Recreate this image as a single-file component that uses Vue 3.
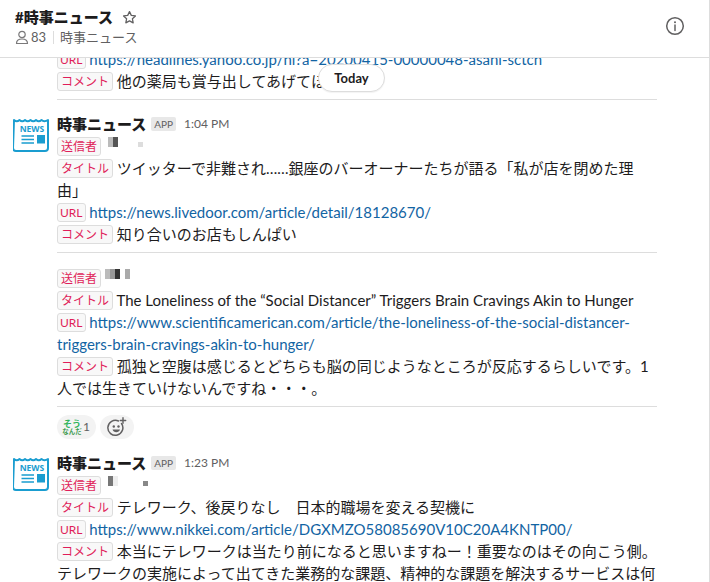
<template>
  <div class="page" lang="ja">
    <header class="channel-header">
      <div>
        <div class="channel-title">
          <span>#時事ニュース</span>
          <svg class="star" width="15" height="15" viewBox="0 0 20 20">
            <path d="M10 2.2l2.4 5 5.5.7-4 3.8 1 5.4-4.900-2.600-4.900 2.600 1-5.400-4-3.800 5.500-.7z" fill="none" stroke="#616061" stroke-width="1.700" stroke-linejoin="round" />
          </svg>
        </div>
        <div class="channel-meta">
          <svg width="14" height="15" viewBox="0 0 14 15">
            <circle cx="7" cy="4.500" r="3.200" fill="none" stroke="#7a797a" stroke-width="1.200" />
            <path d="M1.500 13.500c0-3 2-4.500 5.500-4.500s5.500 1.500 5.500 4.500z" fill="none" stroke="#7a797a" stroke-width="1.200" stroke-linejoin="round" />
          </svg>
          <span class="member-count">83</span>
          <span class="meta-sep"></span>
          <span>時事ニュース</span>
        </div>
      </div>
      <svg class="info" width="20" height="20" viewBox="0 0 20 20">
        <circle cx="10" cy="10" r="8.300" fill="none" stroke="#616061" stroke-width="1.500" />
        <circle cx="10" cy="6.300" r="1" fill="#616061" />
        <path d="M10 9v5.500" stroke="#616061" stroke-width="1.500" stroke-linecap="round" />
      </svg>
    </header>

    <main class="messages">
      <div class="today">Today</div>
      <div class="scroll">
        <section class="top-group">
          <div class="line"><span class="tag url">URL</span> <a>https://headlines.yahoo.co.jp/hl?a=20200415-00000048-asahi-sctch</a></div>
          <div class="line"><span class="tag">コメント</span> 他の薬局も賞与出してあげてほしい</div>
        </section>

        <section v-for="msg in messages" :key="msg.time" class="message">
          <svg class="avatar" width="36" height="36" viewBox="0 0 36 36">
            <path d="M1 4c2 1.800 3.500 1.800 5.500 0 2 1.800 3.500 1.800 5.500 0 2 1.800 3.500 1.800 5.500 0 2 1.800 3.500 1.800 5.500 0 2 1.800 3.500 1.800 5.500 0 2 1.800 3.500 1.800 6.500 0v28c0 2-1.200 3-3 3h-29c-1.800 0-3-1-3-3z" fill="#fff" stroke="#1a9dd0" stroke-width="2" stroke-linejoin="round" />
            <text x="19" y="16" text-anchor="middle" font-family="Open Sans, sans-serif" font-size="8.500" font-weight="700" fill="#1a9dd0">NEWS</text>
            <path d="M8.500 20h12.500M8.500 23.500h12.500M8.500 27h12.500" stroke="#1a9dd0" stroke-width="1.500" />
            <rect x="24" y="19" width="8" height="8.500" fill="#1a9dd0" />
          </svg>
          <div class="message-body">
            <div class="message-head">
              <span class="sender-name">時事ニュース</span>
              <span class="app-badge">APP</span>
              <span class="time">{{ msg.time }}</span>
            </div>
            <template v-for="(post, i) in msg.posts" :key="i">
              <hr v-if="i > 0" class="post-sep" />
              <div class="line"><span class="tag">送信者</span> <span class="blur" :style="{ marginLeft: post.offset + 'px' }"><i v-for="(c, j) in post.pixels" :key="j" :class="{ small: post.small && j === post.pixels.length - 1 }" :style="{ background: c }"></i></span></div>
              <div class="line title"><span class="tag">タイトル</span> {{ post.title }}</div>
              <div class="line"><span class="tag url">URL</span> <a>{{ post.url }}</a></div>
              <div class="line"><span class="tag">コメント</span> {{ post.comment }}</div>
            </template>
            <div v-if="msg.reactions" class="reactions">
              <span class="reaction">
                <span class="sounanda"><b>そう</b><b class="small">なんだ</b></span>
                <span class="count">1</span>
              </span>
              <span class="reaction add">
                <svg width="20" height="20" viewBox="0 0 20 20">
                  <path d="M14.500 6.500a7.500 7.500 0 1 1-3-2.500" fill="none" stroke="#616061" stroke-width="1.500" stroke-linecap="round" />
                  <circle cx="6.800" cy="9.500" r="1.200" fill="#616061" />
                  <circle cx="11.500" cy="9.500" r="1.200" fill="#616061" />
                  <path d="M5.500 12.500h7.500c-.6 1.800-2 2.800-3.750 2.800s-3.150-1-3.750-2.800z" fill="#616061" />
                  <path d="M16 .8v5.400M13.300 3.500h5.400" stroke="#616061" stroke-width="1.400" stroke-linecap="round" />
                </svg>
              </span>
            </div>
          </div>
        </section>
      </div>
    </main>
  </div>
</template>

<script setup>
const messages = [
  {
    time: '1:04 PM',
    reactions: true,
    posts: [
      {
        pixels: ['#bbb', '#555', 'transparent', 'transparent', 'transparent', 'transparent', '#ddd'],
        offset: 3,
        small: true,
        title: 'ツイッターで非難され……銀座のバーオーナーたちが語る「私が店を閉めた理\n由」',
        url: 'https://news.livedoor.com/article/detail/18128670/',
        comment: '知り合いのお店もしんぱい'
      },
      {
        pixels: ['#bbb', '#999', '#333', 'transparent', '#aaa'],
        offset: 0,
        title: 'The Loneliness of the “Social Distancer” Triggers Brain Cravings Akin to Hunger',
        url: 'https://www.scientificamerican.com/article/the-loneliness-of-the-social-distancer-triggers-brain-cravings-akin-to-hunger/',
        comment: '孤独と空腹は感じるとどちらも脳の同じようなところが反応するらしいです。1人では生きていけないんですね・・・。'
      }
    ]
  },
  {
    time: '1:23 PM',
    posts: [
      {
        pixels: ['#777', '#eee', 'transparent', 'transparent', 'transparent', 'transparent', 'transparent', '#888'],
        offset: 3,
        small: true,
        title: 'テレワーク、後戻りなし　日本的職場を変える契機に',
        url: 'https://www.nikkei.com/article/DGXMZO58085690V10C20A4KNTP00/',
        comment: '本当にテレワークは当たり前になると思いますねー！重要なのはその向こう側。テレワークの実施によって出てきた業務的な課題、精神的な課題を解決するサービスは何か'
      }
    ]
  }
]
</script>

<style>
html, body {
  background: #fff;
  overflow: hidden;
}
</style>

<style scoped>
.page {
  width: 710px;
  height: 582px;
  display: flex;
  flex-direction: column;
  box-sizing: border-box;
  border-right: 1px solid #ddd;
  font-family: Lato, "Noto Sans CJK JP", sans-serif;
  font-size: 15px;
  line-height: 22px;
  color: #1d1c1d;
  overflow: hidden;
}
.channel-header {
  height: 58px;
  flex: none;
  box-sizing: border-box;
  border-bottom: 1px solid #ddd;
  padding: 7px 24px 0 15px;
  display: flex;
  justify-content: space-between;
  align-items: flex-start;
  background: #fff;
}
.channel-title {
  display: flex;
  align-items: center;
  gap: 9px;
  font-size: 15px;
  font-weight: 900;
  line-height: 20px;
}
.star {
  margin-top: 1px;
}
.channel-meta {
  display: flex;
  align-items: center;
  margin-top: 1px;
  font-size: 13px;
  line-height: 18px;
  color: #616061;
}
.member-count {
  margin-left: 2px;
}
.meta-sep {
  width: 1px;
  height: 13px;
  background: #ddd;
  margin: 0 6px 0 7px;
}
.info {
  margin-top: 9px;
}
.messages {
  flex: 1;
  position: relative;
  overflow: hidden;
}
.scroll {
  margin-top: -10px;
}
.today {
  position: absolute;
  top: 6px;
  left: 318px;
  width: 67px;
  height: 28px;
  box-sizing: border-box;
  border: 1px solid #ddd;
  border-radius: 14px;
  background: #fff;
  font-size: 13px;
  font-weight: 700;
  line-height: 26px;
  text-align: center;
  box-shadow: 0 1px 1px rgba(0, 0, 0, 0.05);
  z-index: 1;
}
.top-group {
  margin: 0 52px 0 57px;
  padding-bottom: 7px;
  border-bottom: 1px solid #ddd;
  white-space: nowrap;
  overflow: hidden;
}
.message {
  display: flex;
  gap: 8px;
  padding: 13px 52px 0 13px;
}
.avatar {
  flex: none;
  margin-top: 3px;
}
.message-body {
  flex: 1;
  min-width: 0;
}
.message-head {
  display: flex;
  align-items: center;
  height: 22px;
}
.sender-name {
  font-weight: 900;
}
.app-badge {
  margin-left: 5px;
  padding: 0 3px;
  height: 14px;
  line-height: 14px;
  background: #e8e8e8;
  color: #616061;
  font-size: 10px;
  border-radius: 2px;
}
.time {
  margin-left: 8px;
  font-size: 12px;
  color: #616061;
}
.line {
  min-height: 22px;
}
/* the first title breaks right before 由」 in the reference, so the break is in the data */
.title {
  white-space: pre-line;
}
.tag {
  display: inline-block;
  box-sizing: border-box;
  height: 19px;
  line-height: 17px;
  margin-top: 2px;
  padding: 0 3px;
  background: #f8f8f8;
  border: 1px solid #ddd;
  border-radius: 3px;
  color: #e01e5a;
  font-size: 12px;
  vertical-align: top;
}
.tag.url {
  padding: 0 2px;
}
a {
  color: #1264a3;
}
.blur {
  display: inline-flex;
  height: 10px;
  margin-top: 2px;
  vertical-align: top;
}
.blur i {
  display: block;
  width: 5px;
  height: 10px;
}
.blur i.small {
  height: 5px;
  margin-top: 5px;
}
.post-sep {
  border: 0;
  border-top: 1px solid #ddd;
  margin: 7px 0 14px;
}
.reactions {
  display: flex;
  gap: 4px;
  margin-top: 7px;
  padding-top: 8px;
  border-top: 1px solid #ddd;
}
.reaction {
  display: inline-flex;
  align-items: center;
  height: 24px;
  padding: 0 6px 0 6px;
  gap: 2px;
  background: #f3f3f3;
  border-radius: 12px;
  font-size: 12px;
  color: #616061;
}
.reaction.add {
  width: 34px;
  box-sizing: border-box;
  justify-content: center;
  padding: 0;
}
.sounanda {
  display: flex;
  flex-direction: column;
  align-items: center;
  width: 18px;
  color: #2fb45a;
  font-size: 9px;
  line-height: 9px;
}
.sounanda .small {
  font-size: 6.500px;
  line-height: 8px;
  color: #3c9a4e;
  white-space: nowrap;
}
</style>
